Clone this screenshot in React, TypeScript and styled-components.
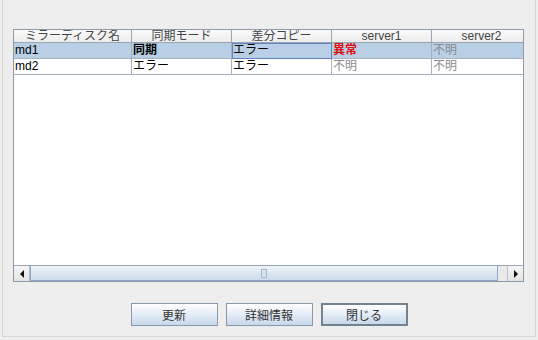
import React from 'react';
import styled, { createGlobalStyle } from 'styled-components';

const GlobalStyle = createGlobalStyle`
  html, body {
    margin: 0;
    padding: 0;
    background: #eeeeee;
  }
  body {
    font-family: "Liberation Sans", "Noto Sans CJK JP", sans-serif;
    font-size: 12px;
  }
`;

const Panel = styled.div`
  box-sizing: border-box;
  width: 534px;
  height: 337px;
  margin-left: 2px;
  border: 1px solid #d8d8d8;
  border-top: none;
  background: #eeeeee;
  padding: 29px 0 0 10px;
  display: flex;
  flex-direction: column;
`;

const Table = styled.div`
  box-sizing: border-box;
  width: 511px;
  height: 253px;
  border: 1px solid #8c9aab;
  background: #ffffff;
  display: flex;
  flex-direction: column;
  overflow: hidden;
`;

const COLS = '118px 100px 100px 100px 100px';

const HeaderRow = styled.div`
  display: grid;
  grid-template-columns: ${COLS};
  height: 13px;
`;

const HeaderCell = styled.div`
  box-sizing: border-box;
  border-right: 1px solid #9aa6b4;
  border-bottom: 1px solid #9aa6b4;
  background: linear-gradient(#fbfbfb, #ececec);
  color: #444;
  text-align: center;
  line-height: 12px;
  font-size: 12px;
  white-space: nowrap;
  overflow: hidden;
`;

const Row = styled.div<{ selected?: boolean }>`
  display: grid;
  grid-template-columns: ${COLS};
  height: 16px;
  background: ${({ selected }) => (selected ? '#b8cfe5' : '#ffffff')};
`;

const Cell = styled.div<{ tone?: 'normal' | 'error' | 'unknown'; focused?: boolean }>`
  box-sizing: border-box;
  border-right: 1px solid #a6b2c0;
  border-bottom: 1px solid #a6b2c0;
  padding-left: 1px;
  line-height: 15px;
  font-size: 12px;
  white-space: nowrap;
  overflow: hidden;
  color: ${({ tone }) => (tone === 'error' ? '#e01010' : tone === 'unknown' ? '#8a8a8a' : '#000')};
  font-weight: ${({ tone }) => (tone === 'error' ? 700 : 400)};
  ${({ focused }) => focused && 'outline: 1px solid #6382bf; outline-offset: -1px;'}
`;

const Filler = styled.div`
  flex: 1;
`;

const ScrollBar = styled.div`
  display: flex;
  height: 16px;
  box-sizing: border-box;
  border-top: 1px solid #9aa6b4;
  background: #eef2f6;
`;

const ArrowButton = styled.div`
  box-sizing: border-box;
  width: 16px;
  height: 15px;
  display: flex;
  align-items: center;
  justify-content: center;
  background: linear-gradient(#f6f6f6, #e4e4e4);
  border-right: 1px solid #b6c0cc;
  border-left: 1px solid #b6c0cc;
  &:first-child {
    border-left: none;
  }
  &:last-child {
    border-right: none;
  }
`;

const Thumb = styled.div`
  box-sizing: border-box;
  width: 468px;
  height: 15px;
  border: 1px solid #8fa6c2;
  border-top: none;
  background: linear-gradient(#eef4fa, #cddcec);
  display: flex;
  align-items: center;
  justify-content: center;
`;

const Grip = styled.div`
  width: 4px;
  height: 7px;
  border: 1px solid #a8b8cc;
  background: #d8e3ef;
`;

const Track = styled.div`
  flex: 1;
  background: #eaeaea;
`;

const ButtonRow = styled.div`
  display: flex;
  justify-content: center;
  gap: 8px;
  margin-top: 21px;
  padding-right: 10px;
`;

const Button = styled.button<{ focused?: boolean }>`
  box-sizing: border-box;
  width: 87px;
  height: 23px;
  padding: 0;
  font-family: "Liberation Sans", "Noto Sans CJK JP", sans-serif;
  font-size: 12px;
  color: #333;
  border: ${({ focused }) => (focused ? '2px solid #74818f' : '1px solid #8a99aa')};
  background: linear-gradient(#ffffff, #e6eef7 45%, #c8d8ea);
`;

const rows = [
  { name: 'md1', mode: '同期', diff: 'エラー', s1: '異常', s2: '不明', selected: true },
  { name: 'md2', mode: 'エラー', diff: 'エラー', s1: '不明', s2: '不明', selected: false },
];

const Tri = ({ dir }: { dir: 'left' | 'right' }) => (
  <svg width="4" height="8" viewBox="0 0 4 8">
    <path d={dir === 'left' ? 'M4 0 L0 4 L4 8 Z' : 'M0 0 L4 4 L0 8 Z'} fill="#111" />
  </svg>
);

export default function App() {
  return (
    <>
      <GlobalStyle />
      <Panel>
        <Table>
          <HeaderRow>
            <HeaderCell>ミラーディスク名</HeaderCell>
            <HeaderCell>同期モード</HeaderCell>
            <HeaderCell>差分コピー</HeaderCell>
            <HeaderCell>server1</HeaderCell>
            <HeaderCell>server2</HeaderCell>
          </HeaderRow>
          {rows.map((r) => (
            <Row key={r.name} selected={r.selected}>
              <Cell>{r.name}</Cell>
              <Cell tone={r.selected ? 'normal' : 'normal'} style={r.selected ? { fontWeight: 700 } : undefined}>
                {r.mode}
              </Cell>
              <Cell focused={r.selected}>{r.diff}</Cell>
              <Cell tone={r.s1 === '異常' ? 'error' : 'unknown'}>{r.s1}</Cell>
              <Cell tone="unknown">{r.s2}</Cell>
            </Row>
          ))}
          <Filler />
          <ScrollBar>
            <ArrowButton>
              <Tri dir="left" />
            </ArrowButton>
            <Thumb>
              <Grip />
            </Thumb>
            <Track />
            <ArrowButton>
              <Tri dir="right" />
            </ArrowButton>
          </ScrollBar>
        </Table>
        <ButtonRow>
          <Button>更新</Button>
          <Button>詳細情報</Button>
          <Button focused>閉じる</Button>
        </ButtonRow>
      </Panel>
    </>
  );
}
